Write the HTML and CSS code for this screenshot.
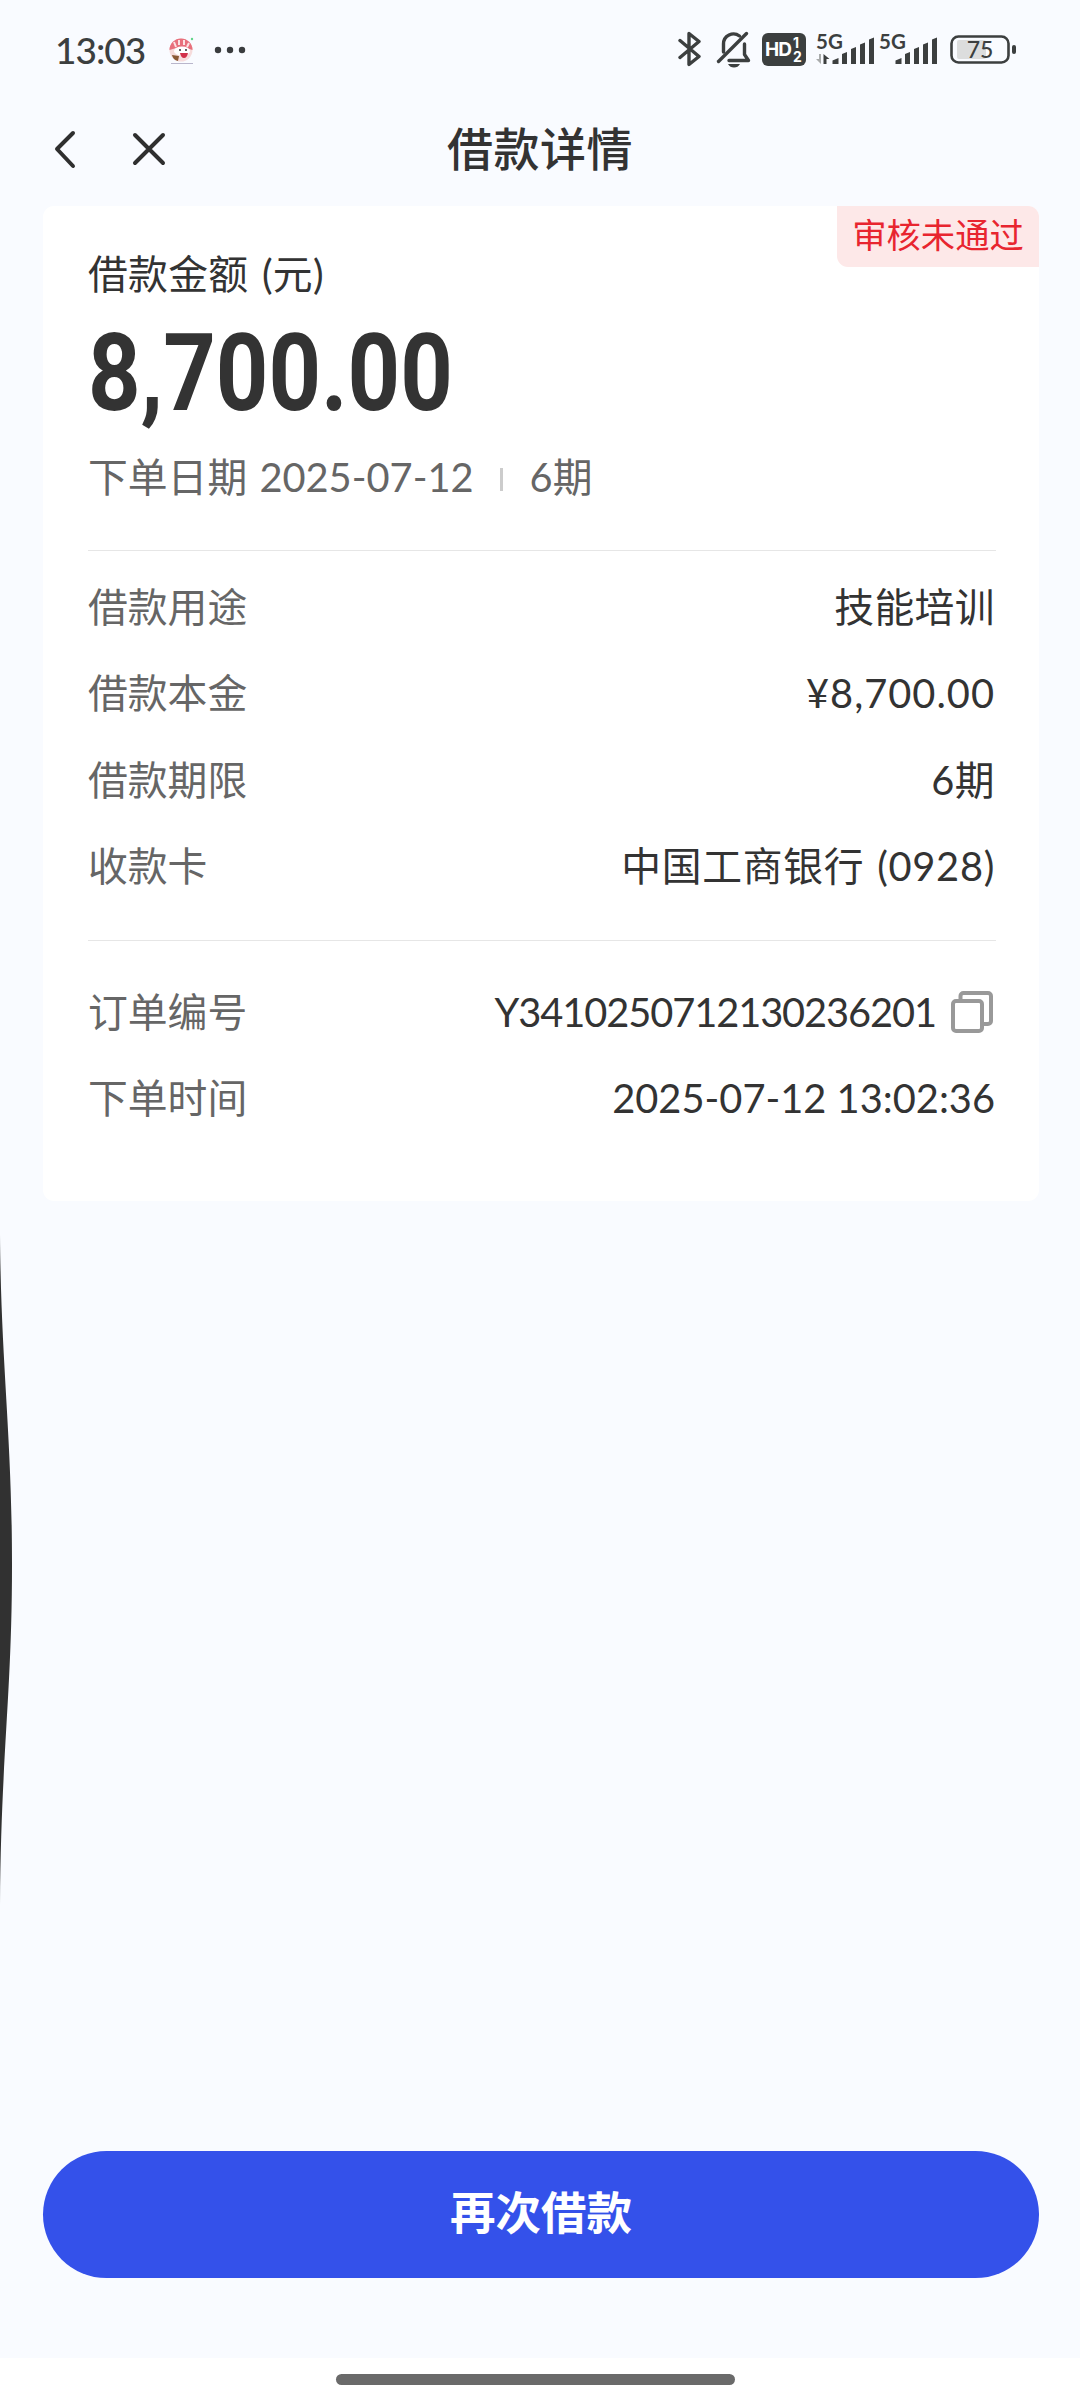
FILE: index.html
```html
<!DOCTYPE html>
<html lang="zh-CN">
<head>
    <meta charset="UTF-8">
    <meta name="viewport" content="width=device-width, initial-scale=1.0">
    <title>借款详情</title>
    <link rel="stylesheet" href="styles.css">
</head>
<body>
    <div class="page">
        <div class="status-bar">
            <div class="status-left">
                <span class="clock">13:03</span>
                <svg class="app-icon" width="28" height="28" viewBox="0 0 28 28">
                    <circle cx="14" cy="13" r="11.5" fill="#f6dcdc"/>
                    <path d="M2.500 13a11.500 11.500 0 0 1 23 0q-11-5-23 0z" fill="#e8707c"/>
                    <path d="M7 5l2 5M12 3v5M17 3v5M22 6l-2 4" stroke="#fbe3e3" stroke-width="2"/>
                    <ellipse cx="15" cy="14" rx="8" ry="4.500" fill="#fff"/>
                    <path d="M12 13h2M18 13h2" stroke="#333" stroke-width="1.6"/>
                    <path d="M13 16h8q-1 5-4 5t-4-5z" fill="#d2304a"/>
                    <path d="M5 18l7 1-1 5q-5-1-6-6z" fill="#8a5a35"/>
                    <circle cx="25" cy="2" r="1.2" fill="#62d68a"/>
                    <path d="M4 26.500h22" stroke="#b9b6cc" stroke-width="1"/>
                </svg>
                <svg width="32" height="8" viewBox="0 0 32 8" fill="#3a3c3e">
                    <circle cx="4" cy="4" r="3.200"/>
                    <circle cx="16" cy="4" r="3.200"/>
                    <circle cx="28" cy="4" r="3.200"/>
                </svg>
            </div>
            <div class="status-right">
                <svg class="bluetooth" width="24" height="36" viewBox="0 0 24 36" fill="none" stroke="#3c3f3f" stroke-width="3.4" stroke-linejoin="round" stroke-linecap="round">
                    <path d="M2 9.500L21 25.500 11 33.500V2.500L21 10.500 2 26.500"/>
                </svg>
                <svg class="bell" width="36" height="38" viewBox="0 0 36 38" fill="none" stroke="#3c3f3f" stroke-width="3.4" stroke-linecap="round" stroke-linejoin="round">
                    <path d="M2.500 31.500L30.500 3.500"/>
                    <path d="M7.500 22V14a10 10 0 0 1 16-8"/>
                    <path d="M13 30.500h19.500l-4-6V14"/>
                    <path d="M12 34h12q-2 3.500-6 3.500t-6-3.500z" fill="#3c3f3f" stroke="none"/>
                </svg>
                <svg class="hd" width="44" height="33" viewBox="0 0 44 33">
                    <rect width="44" height="33" rx="6" fill="#3c3f3f"/>
                    <text class="hd-text" x="3" y="23">HD</text>
                    <text class="hd-num" x="31" y="15">1</text>
                    <text class="hd-num" x="31" y="29">2</text>
                </svg>
                <svg class="signal" width="59" height="40" viewBox="0 -6 59 40" fill="#3c3f3f">
                    <text class="net" x="0" y="15">5G</text>
                    <path d="M5 20v10L0 25h3v-5z" fill="#a9abab"/>
                    <path d="M7.500 30V20l6 5h-3v5z"/>
                    <path d="M16.500 30v-3.500l6-2.500v6zM26 30V20l5-2v12zM35 30V15l5-2v17zM44 30V10.500l5-2V30zM53 30V5.500l5-2V30z"/>
                </svg>
                <svg class="signal" width="59" height="40" viewBox="0 -6 59 40" fill="#3c3f3f">
                    <text class="net" x="0" y="15">5G</text>
                    <path d="M16.500 30v-3.500l6-2.500v6zM26 30V20l5-2v12zM35 30V15l5-2v17zM44 30V10.500l5-2V30zM53 30V5.500l5-2V30z"/>
                </svg>
                <svg class="battery" width="67" height="29" viewBox="0 0 67 29">
                    <rect x="7" y="5" width="29" height="19" rx="2" fill="#dcdddd"/>
                    <rect x="1.500" y="1.500" width="57" height="26" rx="7" fill="none" stroke="#3c3f3f" stroke-width="2.6"/>
                    <rect x="62" y="10" width="4" height="9" rx="2" fill="#3c3f3f"/>
                    <text class="battery-text" x="30" y="22.500">75</text>
                </svg>
            </div>
        </div>

        <div class="nav">
            <div class="nav-buttons">
                <svg width="24" height="40" viewBox="0 0 24 40">
                    <path d="M20 4L4 20l16 17"/>
                </svg>
                <svg width="36" height="36" viewBox="0 0 36 36">
                    <path d="M4 4l28 28M32 4L4 32"/>
                </svg>
            </div>
            <h1 class="title">借款详情</h1>
        </div>

        <div class="card">
            <span class="badge">审核未通过</span>
            <div class="summary">
                <div class="amount-label">借款金额 (元)</div>
                <div class="amount">8,700.00</div>
                <div class="order-date">
                    <span class="date">下单日期 2025-07-12</span>
                    <span class="separator"></span>
                    <span>6期</span>
                </div>
            </div>
            <div class="section">
                <div class="row"><span class="label">借款用途</span><span class="value">技能培训</span></div>
                <div class="row"><span class="label">借款本金</span><span class="value money">¥8,700.00</span></div>
                <div class="row"><span class="label">借款期限</span><span class="value">6期</span></div>
                <div class="row"><span class="label">收款卡</span><span class="value bank">中国工商银行 (0928)</span></div>
            </div>
            <div class="section order">
                <div class="row">
                    <span class="label">订单编号</span>
                    <span class="value number">
                        <span>Y3410250712130236201</span>
                        <svg class="copy" width="42" height="42" viewBox="0 0 42 42">
                            <path d="M9.500 8V5a3 3 0 0 1 3-3H37a3 3 0 0 1 3 3v25a3 3 0 0 1-3 3h-4"/>
                            <rect x="2" y="10" width="29" height="30" rx="3"/>
                        </svg>
                    </span>
                </div>
                <div class="row"><span class="label">下单时间</span><span class="value time">2025-07-12 13:02:36</span></div>
            </div>
        </div>

        <button class="submit-button">再次借款</button>
        <div class="home-bar">
            <div class="handle"></div>
        </div>

        <!-- back gesture bulge on the left edge -->
        <svg class="edge-swipe" width="14" height="670" viewBox="0 0 14 670">
            <path d="M0 0C1 130 12 200 12 330S1 520 0 670z" fill="#313131"/>
        </svg>
    </div>
</body>
</html>
```
FILE: styles.css
```css
* {
    box-sizing: border-box;
}

body {
    margin: 0;
    background-color: #f9fbff;
    font-family: Lato, "Noto Sans CJK SC", sans-serif;
    color: #333;
}

.page {
    position: relative;
    display: flex;
    flex-direction: column;
    width: 1080px;
    height: 2400px;
    overflow: hidden;
}

.status-bar {
    display: flex;
    justify-content: space-between;
    height: 100px;
    padding: 0 63px 2px 55px;
}

.status-left,
.status-right {
    display: flex;
    align-items: center;
}

.clock {
    width: 112px;
    font-size: 37px;
    font-weight: 500;
    letter-spacing: -1px;
    color: #3c3f3f;
}

.app-icon {
    margin: 4px 19px 0 0;
}

.status-left svg:last-child {
    margin-top: 2px;
}

.bell {
    margin-left: 14px;
}

.hd {
    margin-left: 10px;
}

.signal {
    margin: 0 0 2px 4px;
}

.hd + .signal {
    margin-left: 10px;
}

.battery {
    margin-left: 12px;
}

.hd-text {
    font: bold 19px Inter, sans-serif;
    letter-spacing: -1px;
    fill: #fff;
}

.hd-num {
    font: bold 14px Inter, sans-serif;
    fill: #fff;
}

.net {
    font: bold 20.5px Lato, sans-serif;
}

.battery-text {
    font: 500 23px Lato, sans-serif;
    text-anchor: middle;
    fill: #3c3f3f;
}

.nav {
    display: grid;
    grid-template-columns: 1fr auto 1fr;
    align-items: center;
    height: 106px;
    padding: 0 53px 9px;
}

.nav-buttons {
    display: flex;
    align-items: center;
    gap: 54px;
}

.nav-buttons path {
    fill: none;
    stroke: #2f2f2f;
    stroke-width: 4;
    stroke-linecap: round;
    stroke-linejoin: round;
}

.title {
    margin: 0;
    font-size: 46px;
    font-weight: 500;
    line-height: 58px;
    letter-spacing: 0.5px;
}

.card {
    position: relative;
    height: 995px;
    margin: 0 41px 0 43px;
    padding: 0 43px 0 45px;
    background-color: #fff;
    border-radius: 11px;
    font-size: 39.8px;
}

.badge {
    position: absolute;
    top: 0;
    right: 0;
    width: 202px;
    height: 61px;
    background-color: #fde8e8;
    border-radius: 0 11px 0 11px;
    font-size: 34.3px;
    line-height: 58px;
    text-align: center;
    color: #e8252f;
}

.summary {
    height: 345px;
    padding-top: 38px;
    border-bottom: 1px solid #e6e6e6;
}

.amount-label {
    line-height: 60px;
    letter-spacing: 0.3px;
    word-spacing: 3px;
}

.amount {
    height: 136px;
    padding-top: 4px;
    font-family: Roboto, sans-serif;
    font-size: 107px;
    font-weight: bold;
    line-height: 131px;
    transform: scaleX(0.857);
    transform-origin: left;
}

.order-date {
    display: flex;
    align-items: center;
    padding-top: 7px;
    line-height: 60px;
    color: #666;
}

.date {
    word-spacing: 2px;
}

.separator {
    width: 3px;
    height: 23px;
    margin: 4px 27px 0 26px;
    background-color: #ccc;
}

.section {
    height: 390px;
    padding-top: 10px;
    border-bottom: 1px solid #e6e6e6;
}

.order {
    height: 230px;
    padding-top: 25px;
    border-bottom: none;
}

.row {
    display: flex;
    justify-content: space-between;
    align-items: center;
    height: 86.5px;
}

.label {
    color: #666;
}

.value {
    padding-right: 1px;
    letter-spacing: 0.4px;
}

.money {
    padding-top: 4px;
    letter-spacing: 1px;
}

.bank {
    letter-spacing: 0.7px;
    word-spacing: 2px;
}

.number {
    display: flex;
    align-items: center;
    gap: 15px;
    padding-top: 5px;
    letter-spacing: -1.1px;
}

.time {
    padding-top: 3px;
    letter-spacing: 0;
}

.copy {
    margin-right: 2px;
}

.copy path,
.copy rect {
    fill: none;
    stroke: #999;
    stroke-width: 4;
}

.submit-button {
    height: 127px;
    margin: auto 41px 80px 43px;
    padding: 0 0 9px;
    border: none;
    border-radius: 64px;
    background-color: #3451ea;
    font-family: inherit;
    font-size: 45.5px;
    font-weight: bold;
    color: #fff;
}

.home-bar {
    height: 42px;
    padding-top: 16px;
    background-color: #fff;
}

.handle {
    width: 399px;
    height: 11px;
    margin-left: 336px;
    border-radius: 6px;
    background-color: #6a6a6a;
}

.edge-swipe {
    position: absolute;
    top: 1235px;
    left: 0;
}
```
